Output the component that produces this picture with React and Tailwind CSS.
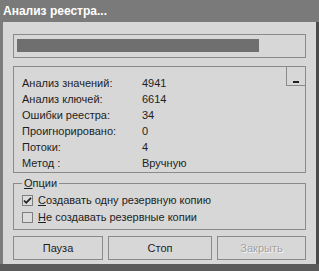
const STATS = [
  ["Анализ значений:", "4941"],
  ["Анализ ключей:", "6614"],
  ["Ошибки реестра:", "34"],
  ["Проигнорировано:", "0"],
  ["Потоки:", "4"],
  ["Метод :", "Вручную"],
];

function CheckBox({ checked }) {
  return (
    <span className="w-[11px] h-[11px] border border-[#7e7e7e] bg-[#dcdcdc] flex items-center justify-center shrink-0">
      {checked && (
        <svg width="9" height="9" viewBox="0 0 9 9">
          <path d="M1 4.5 L3.2 6.8 L8 1.8" fill="none" stroke="#222" strokeWidth="1.8" />
        </svg>
      )}
    </span>
  );
}

export default function App() {
  return (
    <div
      className="w-[319px] h-[271px] bg-[#5a5a5a] flex flex-col overflow-hidden"
      style={{ fontFamily: '"Liberation Sans", Arial, sans-serif' }}
    >
      {/* title bar */}
      <div className="h-[22px] bg-[#7a7a7a] flex items-center pl-[3px] text-white text-[12px] font-bold shrink-0">
        Анализ реестра...
      </div>

      <div className="flex-1 flex pb-[7px]">
        <div className="w-[3px] bg-[#7c7c7c]" />
        <div className="flex-1 bg-[#d7d7d7] px-[10px] pt-[12px] text-[11px] text-[#1e1e1e] flex flex-col">
          {/* progress */}
          <div className="h-[24px] border border-[#8a8a8a] pl-[3px] pt-[4px]">
            <div className="w-[242px] h-[13px] bg-[#6f6f6f]" />
          </div>

          {/* stats */}
          <div className="relative h-[107px] mt-[8px] border border-[#8a8a8a] pl-[8px] pt-[8px]">
            {STATS.map(([k, v]) => (
              <div key={k} className="flex h-[16px] items-center">
                <span className="w-[120px]">{k}</span>
                <span>{v}</span>
              </div>
            ))}
            <div className="absolute -top-px -right-px w-[20px] h-[20px] border border-[#8a8a8a] flex items-end justify-center pb-[2px]">
              <div className="w-[6px] h-[2px] bg-[#222]" />
            </div>
          </div>

          {/* options */}
          <div className="relative h-[47px] mt-[10px] border border-[#8a8a8a] pl-[8px] pt-[8px]">
            <span className="absolute -top-[8px] left-[8px] px-[2px] bg-[#d7d7d7] leading-[14px]">
              <span className="underline">О</span>пции
            </span>
            <div className="flex items-center gap-[5px] h-[17px]">
              <CheckBox checked />
              <span>
                <span className="underline">С</span>оздавать одну резервную копию
              </span>
            </div>
            <div className="flex items-center gap-[5px] h-[17px]">
              <CheckBox />
              <span>
                <span className="underline">Н</span>е создавать резервные копии
              </span>
            </div>
          </div>

          {/* buttons */}
          <div className="flex mt-[6px] h-[24px]">
            <button className="w-[90px] border border-[#8a8a8a] flex items-center justify-center">Пауза</button>
            <button className="w-[104px] ml-[5px] border border-[#8a8a8a] flex items-center justify-center">Стоп</button>
            <button className="w-[89px] ml-[5px] border border-[#8a8a8a] flex items-center justify-center text-[#a2a2a2] [text-shadow:1px_1px_0_#f4f4f4]">
              Закрыть
            </button>
          </div>
        </div>
        <div className="w-[3px] bg-[#4a4a4a]" />
      </div>
    </div>
  );
}
